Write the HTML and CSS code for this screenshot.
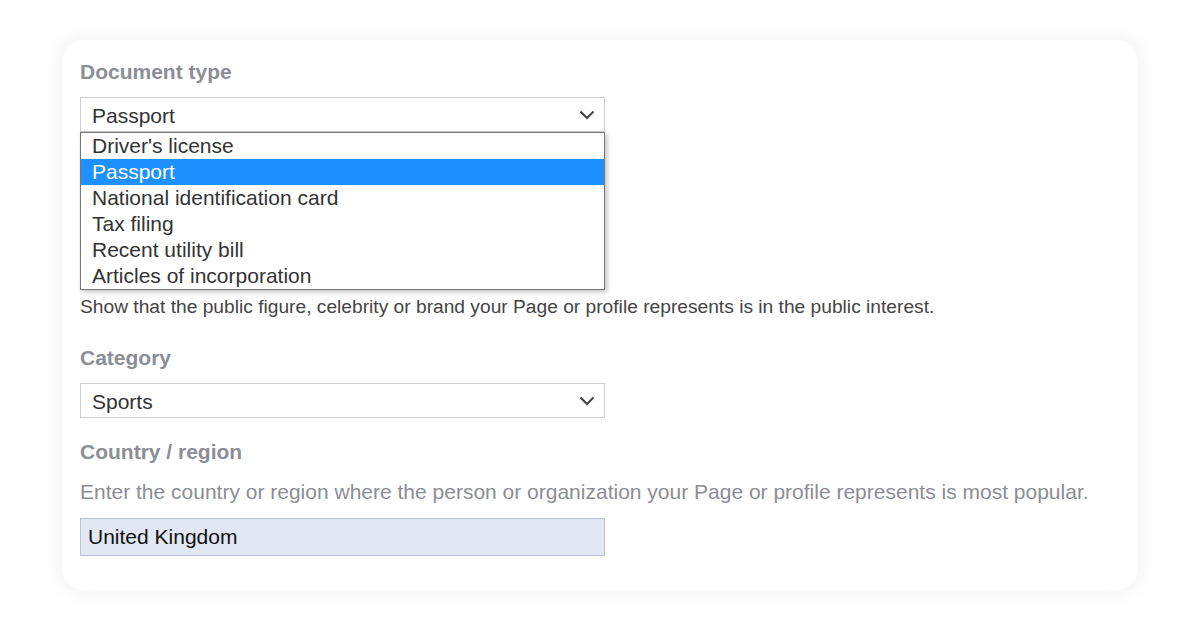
FILE: index.html
```html
<!DOCTYPE html>
<html lang="en">
<head>
    <meta charset="UTF-8">
    <title>Verification form</title>
    <link rel="stylesheet" href="styles.css">
</head>
<body>
    <div class="card">
        <div class="field">
            <div class="label">Document type</div>
            <div class="select-wrap">
                <div class="select">
                    <span>Passport</span>
                    <svg class="chevron" width="16" height="10" viewBox="0 0 16 10"><polyline points="1.5,1.5 8,8 14.5,1.5" fill="none" stroke="#444" stroke-width="2"/></svg>
                </div>
                <ul class="options">
                    <li>Driver's license</li>
                    <li class="selected">Passport</li>
                    <li>National identification card</li>
                    <li>Tax filing</li>
                    <li>Recent utility bill</li>
                    <li>Articles of incorporation</li>
                </ul>
            </div>
        </div>

        <div class="hidden-area"></div>

        <p class="note">Show that the public figure, celebrity or brand your Page or profile represents is in the public interest.</p>

        <div class="field category">
            <div class="label">Category</div>
            <div class="select">
                <span>Sports</span>
                <svg class="chevron" width="16" height="10" viewBox="0 0 16 10"><polyline points="1.5,1.5 8,8 14.5,1.5" fill="none" stroke="#444" stroke-width="2"/></svg>
            </div>
        </div>

        <div class="field country">
            <div class="label">Country / region</div>
            <p class="hint">Enter the country or region where the person or organization your Page or profile represents is most popular.</p>
            <div class="text-input">United Kingdom</div>
        </div>
    </div>
</body>
</html>
```

FILE: styles.css
```css
* {
    margin: 0;
    padding: 0;
    box-sizing: border-box;
}

body {
    font-family: "Liberation Sans", Arial, sans-serif;
    background-color: #fff;
    color: #333;
    padding: 40px 62px;
}

.card {
    width: 1076px;
    height: 550px;
    background: #fff;
    border-radius: 22px;
    box-shadow: 0 0 22px rgba(0,0,0,0.07);
    padding: 20px 18px 35px;
}

.label {
    font-size: 21px;
    line-height: 24px;
    font-weight: bold;
    color: #8b8e94;
    margin-bottom: 13px;
}

.select-wrap {
    position: relative;
    width: 525px;
}

.select {
    width: 525px;
    height: 35px;
    border: 1px solid #cfcfd2;
    background: #fff;
    display: flex;
    align-items: center;
    justify-content: space-between;
    padding: 2px 8px 0 11px;
    font-size: 21px;
    color: #333;
}

.chevron {
    display: block;
    margin-right: 1px;
    margin-top: -2px;
}

.options {
    position: absolute;
    top: 100%;
    left: 0;
    width: 525px;
    list-style: none;
    background: #fff;
    border: 1px solid #777;
    box-shadow: 2px 2px 5px rgba(0,0,0,0.25);
}

.options li {
    height: 26px;
    line-height: 26px;
    padding-left: 11px;
    font-size: 21px;
    color: #333;
}

.options li.selected {
    background-color: #1e90ff;
    color: #fff;
}

.hidden-area {
    height: 164px;
}

.note {
    font-size: 19.2px;
    line-height: 22px;
    color: #444;
}

.category {
    margin-top: 28px;
}

.country {
    margin-top: 22px;
}

.country .label {
    margin-bottom: 0;
}

.hint {
    font-size: 21px;
    line-height: 24px;
    color: #8b8e94;
    margin-top: 16px;
    margin-bottom: 14px;
}

.text-input {
    width: 525px;
    height: 38px;
    line-height: 36px;
    background: #e2e7f4;
    border: 1px solid #b9c3d9;
    padding-left: 7px;
    font-size: 21px;
    color: #111;
}
```
